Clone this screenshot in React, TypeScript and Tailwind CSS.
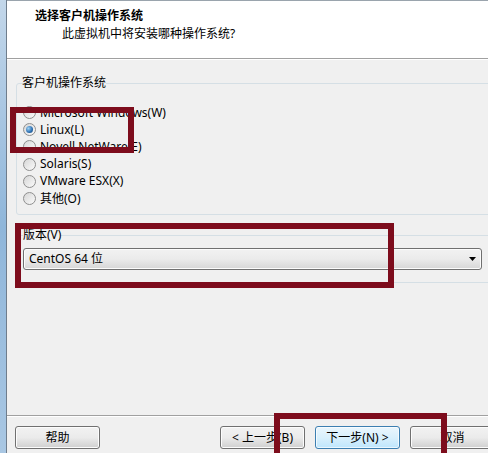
import React from 'react';

const osList = [
  { label: 'Microsoft Windows(W)', checked: false },
  { label: 'Linux(L)', checked: true },
  { label: 'Novell NetWare(E)', checked: false },
  { label: 'Solaris(S)', checked: false },
  { label: 'VMware ESX(X)', checked: false },
  { label: '其他(O)', checked: false },
];

function Radio({ label, checked }: { label: string; checked: boolean }) {
  return (
    <div className="flex items-center h-[17.2px] gap-[4px] pl-[1px]">
      <span className="w-[13px] h-[13px] rounded-full border border-[#8f8f8f] bg-gradient-to-br from-[#d6d6d6] to-[#fbfbfb] flex items-center justify-center shrink-0">
        {checked && (
          <span className="w-[7px] h-[7px] rounded-full bg-[radial-gradient(circle_at_35%_35%,#9fd3f5,#2a6db0_60%,#173f6b)]" />
        )}
      </span>
      <span className="leading-[16px]">{label}</span>
    </div>
  );
}

function Button({ children, focused = false }: { children: React.ReactNode; focused?: boolean }) {
  return (
    <div
      className={`w-[85px] h-[23px] shrink-0 rounded-[3px] border flex items-center justify-center leading-[16px] ${
        focused
          ? 'border-[#3c7fb1] bg-gradient-to-b from-[#eaf6fd] via-[#d9f0fc] to-[#bee6fd] shadow-[inset_0_0_0_1px_#ffffffb0]'
          : 'border-[#707070] bg-gradient-to-b from-[#f2f2f2] via-[#ebebeb] to-[#cfcfcf] shadow-[inset_0_0_0_1px_#fcfcfc]'
      }`}
    >
      {children}
    </div>
  );
}

export default function App() {
  return (
    <div
      className="relative w-[488px] h-[453px] overflow-hidden flex bg-[#f0f0f0] text-black text-[12px]"
      style={{ fontFamily: '"Noto Sans", "Noto Sans CJK SC", sans-serif' }}
    >
      {/* window frame */}
      <div className="w-[7px] shrink-0 bg-gradient-to-b from-[#c3d7ea] via-[#8fb6da] to-[#a9c7e3] border-r border-[#6f7d8c]" />

      <div className="flex-1 flex flex-col min-w-0">
        {/* header */}
        <div className="h-[59px] shrink-0 bg-white border-t border-[#9aa4ad] border-b border-b-[#a0a0a0] pt-[7px]">
          <div className="pl-[28px] font-bold leading-[16px] text-[12px]">选择客户机操作系统</div>
          <div className="pl-[55px] mt-[2px] leading-[16px]">此虚拟机中将安装哪种操作系统?</div>
        </div>

        <div className="flex-1 flex flex-col border-t border-white pt-[15px]">
          <fieldset className="ml-[9px] -mr-[10px] border border-[#d5dfe5] rounded-[3px] pl-[5px] pb-[7px]">
            <legend className="leading-[16px] px-0">客户机操作系统</legend>
            <div className="pt-[13px] flex flex-col">
              {osList.map((os) => (
                <Radio key={os.label} label={os.label} checked={os.checked} />
              ))}
            </div>
          </fieldset>

          <fieldset className="ml-[9px] -mr-[10px] mt-[12px] border border-[#d5dfe5] rounded-[3px] pl-[6px] pr-[15px] pb-[12px]">
            <legend className="leading-[16px] px-0">版本(V)</legend>
            <div className="mt-[5px] h-[22px] rounded-[3px] border border-[#707070] bg-gradient-to-b from-[#f2f2f2] via-[#ebebeb] to-[#d6d6d6] shadow-[inset_0_0_0_1px_#fcfcfc] flex items-center pl-[5px] pr-[5px]">
              <span className="flex-1 leading-[16px]">CentOS 64 位</span>
              <svg width="7" height="4" viewBox="0 0 7 4">
                <path d="M0 0h7L3.5 4z" fill="#000" />
              </svg>
            </div>
          </fieldset>

          <div className="flex-1" />

          {/* footer */}
          <div className="h-[38px] shrink-0 border-t border-[#a0a0a0] shadow-[inset_0_1px_0_#ffffff] pt-[10px] flex">
            <div className="ml-[8px]">
              <Button>帮助</Button>
            </div>
            <div className="ml-[120px] flex gap-[10px]">
              <Button>&lt; 上一步(B)</Button>
              <Button focused>下一步(N) &gt;</Button>
              <Button>取消</Button>
            </div>
          </div>
        </div>
      </div>

      {/* red highlight boxes */}
      <div className="absolute left-[10px] top-[107px] w-[124px] h-[46px] border-[6px] border-[#7d0c1c]" />
      <div className="absolute left-[15px] top-[223px] w-[379px] h-[65px] border-[6px] border-[#7d0c1c]" />
      <div className="absolute left-[274px] top-[413px] w-[173px] h-[60px] border-[6px] border-[#7d0c1c]" />
    </div>
  );
}
